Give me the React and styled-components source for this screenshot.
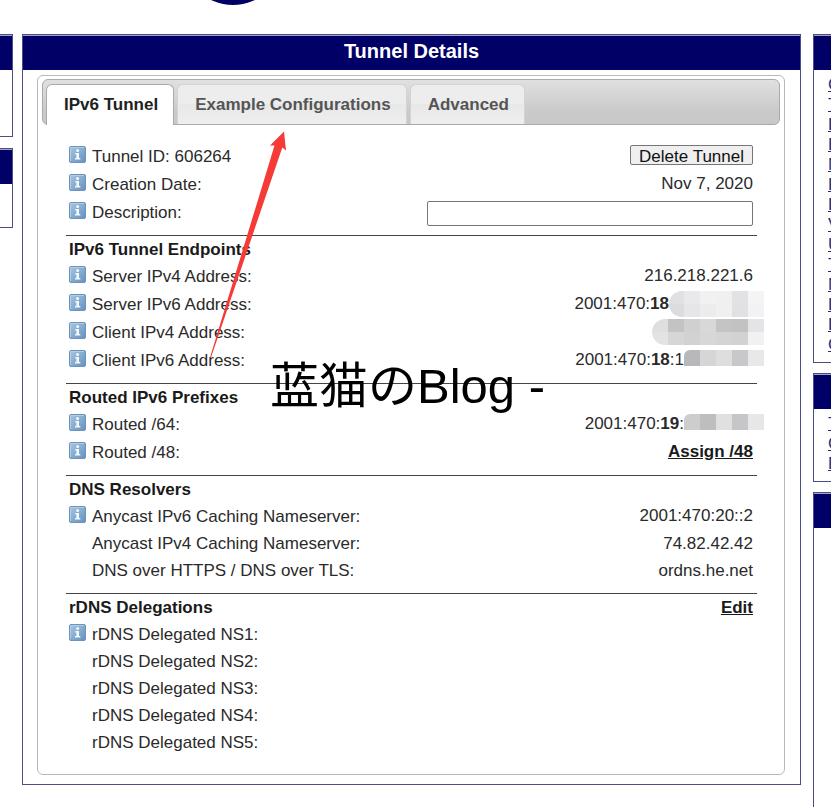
import React, { useState } from 'react';
import styled, { createGlobalStyle } from 'styled-components';

const leftBoxes = [66, 43];

const rightBoxes = [
  ['C', 'T', 'F', 'B', 'N', 'F', 'F', 'V', 'U', 'T', 'N', 'L', 'F', 'C'],
  ['T', 'C', 'D'],
  [],
];

const tabs = ['IPv6 Tunnel', 'Example Configurations', 'Advanced'];

// Each row of a mosaic is a list of cell colours, right aligned on a 16px grid
const mosaics = {
  serverV6: {
    width: 95,
    height: 26,
    rows: [
      ['#f3f3f4', '#e0e0e3', '#e9e9eb', '#f1f1f2', '#f0f0f1', '#e2e2e4', '#f4f4f5'],
      ['#efeff0', '#dcdce0', '#e6e6e8', '#ececed', '#f0f0f1', '#e1e1e4', '#f2f2f4'],
    ],
  },
  clientV4: {
    width: 112,
    height: 26,
    rows: [
      ['#dfdfe0', '#c3c3c4', '#d0d0d1', '#d8d8d9', '#c4c4c5', '#c2c2c3', '#e4e4e7'],
      ['#e3e3e4', '#d6d6d7', '#d2d2d3', '#d7d7d8', '#d4d4d5', '#d2d2d3', '#f1f1f3'],
    ],
  },
  clientV6: {
    width: 80,
    height: 16,
    rows: [['#b8b8ba', '#d6d6d7', '#dededf', '#c8c8ca', '#e8e8e9']],
  },
  routed64: {
    width: 80,
    height: 16,
    rows: [['#cdcdce', '#bebebf', '#e0e0e1', '#c6c6c8', '#e7e7e8']],
  },
};

const InfoIcon = () => (
  <IconSvg viewBox="0 0 17 17" aria-hidden="true">
    <defs>
      <linearGradient id="info" x1="0" y1="0" x2="1" y2="1">
        <stop offset="0" stopColor="#a9c6e2" />
        <stop offset="0.5" stopColor="#86add1" />
        <stop offset="1" stopColor="#6590bd" />
      </linearGradient>
    </defs>
    <rect x="0.5" y="0.5" width="16" height="16" rx="1.5" fill="url(#info)" stroke="#6c93bb" />
    <path d="M1.5 15V1.5H15" fill="none" stroke="#b9d2e9" strokeWidth="0.8" />
    <circle cx="8.6" cy="4.6" r="1.5" fill="#f4f8fc" />
    <path d="M6.3 7H10v5h1.3v1.4H6V12h1.4V8.4H6.3z" fill="#f4f8fc" />
  </IconSvg>
);

const Mosaic = ({ name }) => {
  const { width, height, rows } = mosaics[name];
  const rowHeight = height / rows.length;
  const tall = rows.length > 1;
  return (
    <MosaicSvg width={width} height={height} $tall={tall} aria-hidden="true">
      <clipPath id={name}>
        <path
          d={
            tall
              ? `M13 0H${width}V${height}H13A13 13 0 0 1 13 0Z`
              : `M6 0H${width}V${height}H0V6A6 6 0 0 1 6 0Z`
          }
        />
      </clipPath>
      <g clipPath={`url(#${name})`}>
        {rows.map((cells, y) =>
          cells.map((fill, x) => (
            <rect
              key={`${x}-${y}`}
              x={width - (cells.length - x) * 16}
              y={y * rowHeight}
              width="16"
              height={rowHeight}
              fill={fill}
            />
          ))
        )}
      </g>
    </MosaicSvg>
  );
};

const Field = ({ label, info, htmlFor, children }) => (
  <Row $info={info}>
    <IconSlot>{info && <InfoIcon />}</IconSlot>
    <Label as={htmlFor ? 'label' : 'span'} htmlFor={htmlFor}>{label}</Label>
    <Value>{children}</Value>
  </Row>
);

const App = () => {
  const [activeTab, setActiveTab] = useState(0);
  const [description, setDescription] = useState('');

  return (
    <>
      <GlobalStyle />
      <Page>
        <Header>
          <svg width="46" height="5" viewBox="0 0 46 5" aria-hidden="true">
            <circle cx="23" cy="-46" r="51" fill="#000066" />
          </svg>
        </Header>

        <Columns>
          <LeftColumn>
            {leftBoxes.map(height => (
              <LeftBox key={height}>
                <BoxTitle />
                <BoxBody $height={height} />
              </LeftBox>
            ))}
          </LeftColumn>

          <Main>
            <BoxTitle>Tunnel Details</BoxTitle>
            <Widget>
              <TabList role="tablist">
                {tabs.map((tab, index) => (
                  <Tab
                    key={tab}
                    role="tab"
                    aria-selected={index === activeTab}
                    $active={index === activeTab}
                    onClick={() => setActiveTab(index)}
                  >
                    {tab}
                  </Tab>
                ))}
              </TabList>

              <TabPanel role="tabpanel">
                <Section>
                  <Field label="Tunnel ID: 606264" info>
                    <DeleteButton>Delete Tunnel</DeleteButton>
                  </Field>
                  <Field label="Creation Date:" info>Nov 7, 2020</Field>
                  <Field label="Description:" info htmlFor="description">
                    <DescriptionInput
                      id="description"
                      type="text"
                      value={description}
                      onChange={e => setDescription(e.target.value)}
                    />
                  </Field>
                </Section>

                <Section>
                  <Heading>IPv6 Tunnel Endpoints</Heading>
                  <Field label="Server IPv4 Address:" info>216.218.221.6</Field>
                  <Field label="Server IPv6 Address:" info>
                    2001:470:<b>18</b><Mosaic name="serverV6" />
                  </Field>
                  <Field label="Client IPv4 Address:" info>
                    <Mosaic name="clientV4" />
                  </Field>
                  <Field label="Client IPv6 Address:" info>
                    2001:470:<b>18</b>:1<Mosaic name="clientV6" />
                  </Field>
                </Section>

                <Section>
                  <Heading>Routed IPv6 Prefixes</Heading>
                  <Field label="Routed /64:" info>
                    2001:470:<b>19</b>:<Mosaic name="routed64" />
                  </Field>
                  <Field label="Routed /48:" info>
                    <ActionLink href="#assign">Assign /48</ActionLink>
                  </Field>
                </Section>

                <Section>
                  <Heading>DNS Resolvers</Heading>
                  <Field label="Anycast IPv6 Caching Nameserver:" info>2001:470:20::2</Field>
                  <Field label="Anycast IPv4 Caching Nameserver:">74.82.42.42</Field>
                  <Field label="DNS over HTTPS / DNS over TLS:">ordns.he.net</Field>
                </Section>

                <Section>
                  <Heading>
                    rDNS Delegations
                    <ActionLink href="#edit">Edit</ActionLink>
                  </Heading>
                  {[1, 2, 3, 4, 5].map(n => (
                    <Field key={n} label={`rDNS Delegated NS${n}:`} info={n === 1} />
                  ))}
                </Section>
              </TabPanel>
            </Widget>

            <Arrow width="80" height="228" viewBox="0 0 80 228" aria-hidden="true">
              <path d="M74 1.5L76 20.5L72.3 17.5L1 227.5H0L64.5 15.5L60 15.5Z" fill="#f43b38" />
            </Arrow>
            <Watermark>蓝猫のBlog -</Watermark>
          </Main>

          <RightColumn>
            {rightBoxes.map((links, index) => (
              <RightBox key={index} $fill={links.length === 0}>
                <BoxTitle />
                <LinkList>
                  {links.map((link, i) => (
                    <li key={i}><SideLink href="#menu">{link}</SideLink></li>
                  ))}
                </LinkList>
              </RightBox>
            ))}
          </RightColumn>
        </Columns>
      </Page>
    </>
  );
};

const GlobalStyle = createGlobalStyle`
  * {
    box-sizing: border-box;
  }

  body {
    margin: 0;
    background: #fff;
    color: #2a2a2a;
    font-family: 'Liberation Sans', 'Noto Sans CJK SC', Arial, sans-serif;
    font-size: 17px;
  }
`;

const Page = styled.div`
  display: flex;
  flex-direction: column;
  min-height: 100vh;
  overflow: hidden;
`;

const Header = styled.header`
  display: flex;
  align-items: flex-start;
  height: 34px;
  padding-left: 210px;
`;

const Columns = styled.div`
  flex: 1;
  display: flex;
  align-items: flex-start;
`;

const LeftColumn = styled.aside`
  display: flex;
  flex-direction: column;
  gap: 11px;
  width: 13px;
  margin-right: 9px;
`;

const RightColumn = styled.aside`
  align-self: stretch;
  display: flex;
  flex-direction: column;
  gap: 10px;
  width: 18px;
  margin-left: 12px;
  overflow: hidden;
`;

const Box = styled.section`
  border: 1px solid #4d4d85;
`;

const LeftBox = styled(Box)`
  border-left: none;
`;

const RightBox = styled(Box)`
  flex: ${props => (props.$fill ? '1' : 'none')};
  border-right: none;
  border-bottom-width: ${props => (props.$fill ? '0' : '1px')};
`;

const BoxTitle = styled.h2`
  height: 35px;
  margin: 0;
  border-top: 1px solid #a3a3cc;
  background: #000066;
  color: #fff;
  font-size: 20px;
  line-height: 30px;
  text-align: center;
`;

const BoxBody = styled.div`
  height: ${props => props.$height}px;
`;

const LinkList = styled.ul`
  margin: 0;
  padding: 5px 0 7px 14px;
  list-style: none;
`;

const SideLink = styled.a`
  display: block;
  color: #1f2f80;
  line-height: 20px;
  text-decoration: underline;
`;

const Main = styled(Box)`
  position: relative;
  flex: 1;
  min-width: 0;
`;

const Widget = styled.div`
  margin: 5px 15px 9px 14px;
  padding: 3px 4px 18px;
  border: 1px solid #b8b8b8;
  border-radius: 6px;
`;

const TabList = styled.div`
  display: flex;
  align-items: flex-end;
  gap: 3px;
  height: 46px;
  padding-left: 3px;
  border: 1px solid #aaa;
  border-radius: 6px;
  background: linear-gradient(#e0e0e0, #cacaca 70%, #c8c8c8);
`;

const Tab = styled.button`
  height: ${props => (props.$active ? '41px' : '40px')};
  margin-bottom: ${props => (props.$active ? '-1px' : '0')};
  padding: 0 15px 0 17px;
  border: 1px solid ${props => (props.$active ? '#aaa' : '#d3d3d3')};
  border-bottom: none;
  border-radius: 6px 6px 0 0;
  background: ${props =>
    props.$active ? '#fff' : 'linear-gradient(#ededed 50%, #e8e8e8 50%, #eee)'};
  color: ${props => (props.$active ? '#212121' : '#555')};
  font-family: inherit;
  font-size: 17px;
  font-weight: bold;
  cursor: pointer;
`;

const TabPanel = styled.div`
  padding: 17px 23px 0 24px;
`;

const Section = styled.div`
  padding: 0 4px 9px 3px;

  & + & {
    border-top: 1px solid #444;
  }

  &:last-child {
    padding-bottom: 0;
  }
`;

const Heading = styled.h3`
  display: flex;
  justify-content: space-between;
  height: 26px;
  margin: 0;
  color: #1a1a1a;
  font-size: 17px;
  line-height: 28px;
`;

const Row = styled.div`
  display: flex;
  height: ${props => (props.$info ? '28px' : '27px')};
  line-height: ${props => (props.$info ? '30px' : '28px')};
`;

const IconSlot = styled.span`
  display: flex;
  align-items: flex-start;
  width: 23px;
  padding-top: 4px;
`;

const IconSvg = styled.svg`
  width: 17px;
  height: 17px;
`;

const Label = styled.span`
  flex: 1;
`;

const Value = styled.span`
  display: flex;
  align-items: center;
  height: 28px;
`;

const MosaicSvg = styled.svg`
  margin-right: -11px;
  margin-bottom: ${props => (props.$tall ? '0' : '4px')};
`;

const DeleteButton = styled.button`
  height: 20px;
  margin-bottom: 2px;
  padding: 2px 8px 0;
  border: 1px solid #767676;
  border-radius: 2px;
  background: #efefef;
  color: #111;
  font-family: inherit;
  font-size: 17px;
  line-height: 17px;
  overflow: hidden;
  cursor: pointer;
`;

const DescriptionInput = styled.input`
  width: 326px;
  height: 25px;
  margin-top: 2px;
  padding: 1px 4px;
  border: 1px solid #767676;
  border-radius: 2px;
  font-family: inherit;
  font-size: 17px;
`;

const ActionLink = styled.a`
  color: #1a1a1a;
  font-weight: bold;
  text-decoration: underline;
`;

const Arrow = styled.svg`
  position: absolute;
  top: 95px;
  left: 187px;
  pointer-events: none;
`;

const Watermark = styled.div`
  position: absolute;
  top: 319px;
  left: 247px;
  color: #000;
  font-size: 49px;
  line-height: 64px;
  white-space: nowrap;
  pointer-events: none;
`;

export default App;
